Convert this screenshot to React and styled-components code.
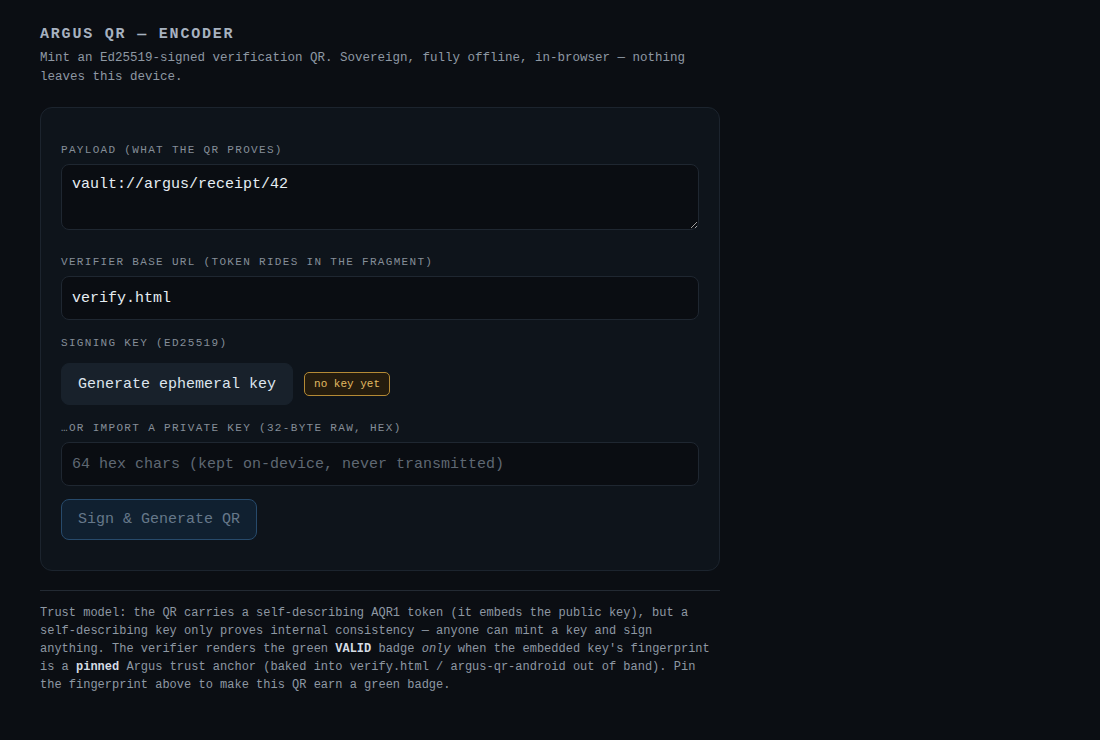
import React from "react";
import styled, { createGlobalStyle } from "styled-components";

const mono = `"Liberation Mono", "DejaVu Sans Mono", monospace`;

const Global = createGlobalStyle`
  html, body {
    margin: 0;
    padding: 0;
    background: #0b0e13;
  }
  body {
    font-family: ${mono};
    color: #c9d1d9;
  }
  * { box-sizing: border-box; }
`;

const Page = styled.main`
  width: 680px;
  padding: 25px 0 40px;
  margin-left: 40px;
`;

const Title = styled.h1`
  margin: 0;
  font-size: 15px;
  line-height: 20px;
  font-weight: 700;
  letter-spacing: 0.12em;
  color: #a7b2c0;
`;

const Lede = styled.p`
  margin: 4px 0 0;
  font-size: 12.5px;
  line-height: 19px;
  color: #8e98a3;
  max-width: 660px;
`;

const Card = styled.section`
  margin-top: 20px;
  background: #0e141b;
  border: 1px solid #1c242e;
  border-radius: 12px;
  padding: 19px 20px 30px;
  display: flex;
  flex-direction: column;
`;

const Label = styled.label`
  display: block;
  margin: 16px 0 7px;
  font-size: 11px;
  line-height: 14px;
  letter-spacing: 0.12em;
  text-transform: uppercase;
  color: #858e98;
`;

const fieldBase = `
  width: 100%;
  background: #0a0d12;
  border: 1px solid #1f2731;
  border-radius: 8px;
  color: #e6edf3;
  font-family: ${mono};
  font-size: 15px;
  padding: 0 10px;
  outline: none;
  &::placeholder { color: #5f6873; }
`;

const TextArea = styled.textarea`
  ${fieldBase}
  display: block;
  height: 66px;
  padding: 10px 10px;
  line-height: 20px;
  resize: vertical;
  margin-bottom: 9px;
`;

const Input = styled.input`
  ${fieldBase}
  display: block;
  height: 44px;
`;

const Row = styled.div`
  display: flex;
  align-items: center;
  gap: 11px;
  margin-top: 6px;
`;

const Button = styled.button`
  font-family: ${mono};
  font-size: 15px;
  height: ${(p) => (p.$primary ? "41px" : "42px")};
  padding: 0 16px;
  border-radius: 8px;
  cursor: pointer;
  border: 1px solid ${(p) => (p.$primary ? "#274a6b" : "#18212b")};
  background: ${(p) => (p.$primary ? "#102030" : "#18212b")};
  color: ${(p) => (p.$primary ? "#66788a" : "#dde5ee")};
`;

const Badge = styled.span`
  display: inline-flex;
  align-items: center;
  height: 24px;
  padding: 0 9px;
  border-radius: 5px;
  border: 1px solid #b48a35;
  background: #241c0e;
  color: #e0ba62;
  font-size: 11px;
`;

const Actions = styled.div`
  margin-top: 13px;
  display: flex;
`;

const Rule = styled.hr`
  margin: 19px 0 0;
  border: 0;
  border-top: 1px solid #232a33;
`;

const Note = styled.p`
  margin: 13px 0 0;
  font-size: 12px;
  line-height: 18px;
  color: #8e98a3;
  strong { color: #d5dce4; font-weight: 700; }
  em { font-style: italic; }
`;

export default function App() {
  return (
    <>
      <Global />
      <Page>
        <Title>ARGUS QR — ENCODER</Title>
        <Lede>
          Mint an Ed25519-signed verification QR. Sovereign, fully offline, in-browser — nothing
          leaves this device.
        </Lede>

        <Card>
          <Label htmlFor="payload">Payload (what the QR proves)</Label>
          <TextArea id="payload" defaultValue="vault://argus/receipt/42" />

          <Label htmlFor="base">Verifier base URL (token rides in the fragment)</Label>
          <Input id="base" defaultValue="verify.html" />

          <Label>Signing key (Ed25519)</Label>
          <Row>
            <Button type="button">Generate ephemeral key</Button>
            <Badge>no key yet</Badge>
          </Row>

          <Label htmlFor="priv">…or import a private key (32-byte raw, hex)</Label>
          <Input id="priv" placeholder="64 hex chars (kept on-device, never transmitted)" />

          <Actions>
            <Button type="button" $primary>Sign &amp; Generate QR</Button>
          </Actions>
        </Card>

        <Rule />
        <Note>
          Trust model: the QR carries a self-describing AQR1 token (it embeds the public key), but a
          self-describing key only proves internal consistency — anyone can mint a key and sign
          anything. The verifier renders the green <strong>VALID</strong> badge <em>only</em> when the
          embedded key's fingerprint is a <strong>pinned</strong> Argus trust anchor (baked into
          verify.html / argus-qr-android out of band). Pin the fingerprint above to make this QR earn
          a green badge.
        </Note>
      </Page>
    </>
  );
}
